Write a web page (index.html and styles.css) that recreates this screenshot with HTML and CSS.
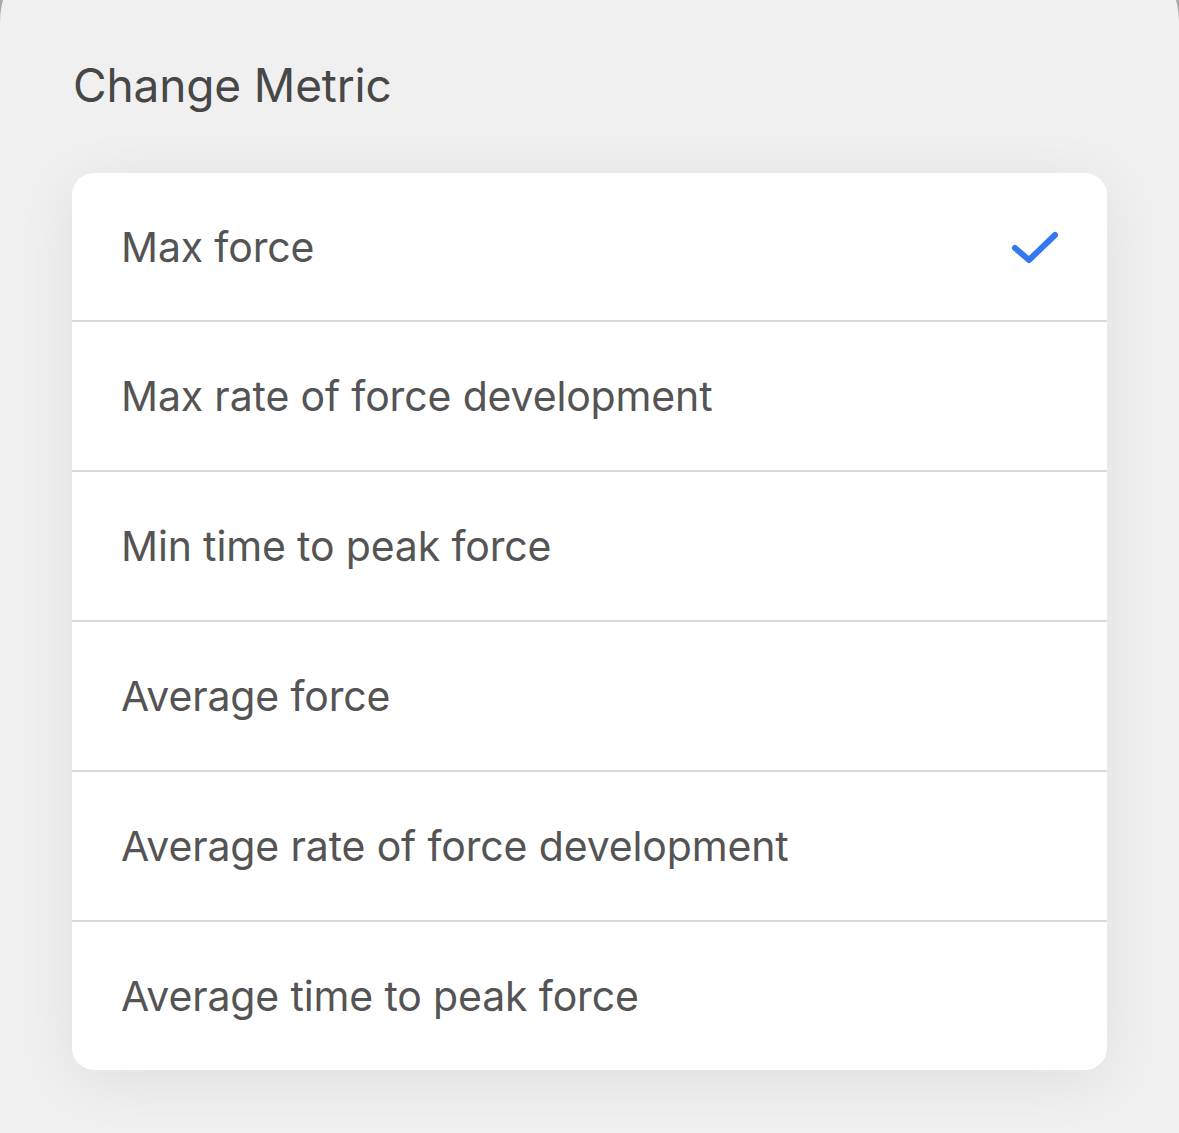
FILE: index.html
```html
<!DOCTYPE html>
<html lang="en">
<head>
<meta charset="utf-8">
<title>Change Metric</title>
<link rel="stylesheet" href="styles.css">
</head>
<body>
<div class="sheet">
  <h1 class="title">Change Metric</h1>
  <ul class="list">
    <li class="row"><span class="label">Max force</span>
      <svg class="check" width="50" height="34" viewBox="0 0 50 34"><path d="M4 18 L18 30 L44 5" fill="none" stroke="#3478f0" stroke-width="6" stroke-linecap="round" stroke-linejoin="round"/></svg>
    </li>
    <li class="row"><span class="label">Max rate of force development</span></li>
    <li class="row"><span class="label">Min time to peak force</span></li>
    <li class="row"><span class="label">Average force</span></li>
    <li class="row"><span class="label">Average rate of force development</span></li>
    <li class="row"><span class="label">Average time to peak force</span></li>
  </ul>
</div>
</body>
</html>
```
FILE: styles.css
```css
html, body {
  margin: 0;
  padding: 0;
  background: #a8a8a8;
}
body {
  width: 1179px;
  height: 1133px;
  overflow: hidden;
  font-family: Inter, "Liberation Sans", sans-serif;
}
.sheet {
  box-sizing: border-box;
  height: 1193px;
  margin-top: -60px;
  padding: 60px 72px 0;
  background: #f0f0f0;
  border-radius: 82px 82px 0 0;
}
.title {
  margin: 0;
  padding-top: 58px;
  padding-left: 1px;
  font-size: 46px;
  line-height: 54px;
  font-weight: 400;
  letter-spacing: -0.15px;
  color: #474747;
}
.list {
  list-style: none;
  margin: 61px 0 0;
  padding: 0;
  background: #fff;
  border-radius: 22px;
  box-shadow: 0 10px 60px rgba(0, 0, 0, 0.07);
  overflow: hidden;
}
.row {
  display: flex;
  align-items: center;
  justify-content: space-between;
  height: 148px;
  padding: 0 46px 0 49px;
  border-top: 2px solid #dadada;
}
.row:first-child {
  border-top: none;
  height: 147px;
}
.label {
  font-size: 41px;
  letter-spacing: -0.15px;
  color: #545454;
}
.check {
  display: block;
}
```
